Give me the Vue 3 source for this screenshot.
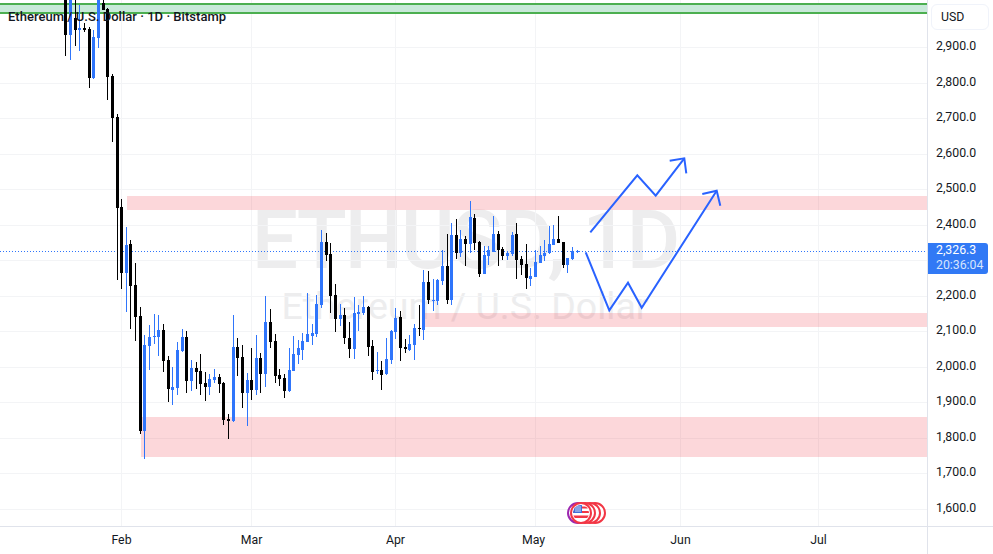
<template>
  <div class="terminal">
    <div class="pane">
      <!-- symbol watermark sits under the series -->
      <div class="watermark">
        <div class="wm-big">ETHUSD, 1D</div>
        <div class="wm-small">Ethereum / U.S. Dollar</div>
      </div>

      <svg class="series" width="927" height="526" viewBox="0 0 927 526">
        <g class="grid">
          <line v-for="y in gridY" :key="'h' + y" x1="0" x2="927" :y1="y" :y2="y" />
          <line v-for="m in months" :key="'v' + m.name" :x1="m.x" :x2="m.x" y1="0" y2="526" />
        </g>

        <rect class="zone" x="127" y="196" width="800" height="14" />
        <rect class="zone" x="425" y="313" width="502" height="14" />
        <rect class="zone" x="141" y="417" width="786" height="40" />

        <rect x="0" y="3" width="927" height="11" fill="#c8e9d9" />
        <rect x="0" y="3" width="927" height="2" fill="#4caf50" />
        <rect x="0" y="12" width="927" height="2" fill="#4caf50" />

        <line class="last-price" x1="0" x2="927" y1="251.5" y2="251.5" />

        <g v-for="c in candles" :key="c[0]" :fill="c[5] ? '#2f75fb' : '#000000'">
          <rect :x="c[0]" :y="c[1]" width="1" :height="c[2] - c[1]" />
          <rect :x="c[0] - 1" :y="c[3]" width="3" :height="Math.max(c[4] - c[3], 1)" />
        </g>

        <g class="drawing">
          <polyline points="590.3,232.3 637.3,175.3 655.7,195.7 684.3,158.3" />
          <polyline points="669.7,160.7 684.3,158.3 686.3,173.3" />
          <polyline points="585.7,252.3 609.3,310.3 628,282.7 641.7,307.7 716.7,190.7" />
          <polyline points="702.3,194 716.7,190.7 720.3,205.7" />
        </g>
      </svg>

      <div class="legend">Ethereum / U.S. Dollar · 1D · Bitstamp</div>

      <!-- economic events marker -->
      <svg class="events" width="40" height="24" viewBox="0 0 40 24">
        <circle cx="11" cy="12" r="10" fill="#fff" stroke="#9c27b0" stroke-width="2" />
        <circle cx="28" cy="12" r="10" fill="#fff" stroke="#f23645" stroke-width="2" />
        <circle cx="23" cy="12" r="10" fill="#fff" stroke="#f23645" stroke-width="2" />
        <circle cx="18" cy="12" r="10" fill="#fff" stroke="#f23645" stroke-width="2" />
        <circle cx="14" cy="12" r="10" fill="#fff" stroke="#f23645" stroke-width="2" />
        <clipPath id="flag-clip"><circle cx="14" cy="12" r="8" /></clipPath>
        <g clip-path="url(#flag-clip)">
          <rect x="6" y="4" width="16" height="16" fill="#fff" />
          <rect x="6" y="5.5" width="16" height="2" fill="#f23645" />
          <rect x="6" y="10" width="16" height="2" fill="#f23645" />
          <rect x="6" y="14.5" width="16" height="2.5" fill="#f23645" />
          <rect x="6" y="4" width="9" height="8" fill="#3f6fd8" />
          <path d="M8 6h6M8 8h6M8 10h6M9 5v6M11 5v6M13 5v6" stroke="#c9d6f5" stroke-width=".6" />
        </g>
      </svg>
    </div>

    <div class="price-axis">
      <div class="currency">USD</div>
      <div class="ticks">
        <div v-for="(p, i) in prices" :key="i" class="tick">{{ p }}</div>
      </div>
      <div class="price-badge">
        <span>2,326.3</span>
        <span class="countdown">20:36:04</span>
      </div>
    </div>

    <div class="time-axis">
      <span v-for="m in months" :key="m.name" class="month" :style="{ left: (m.label || m.x) + 'px' }">{{ m.name }}</span>
    </div>
    <div class="corner"></div>
  </div>
</template>

<script setup>
// the 2,300.0 tick is covered by the last price badge, so it stays empty
const prices = [
  "2,900.0", "2,800.0", "2,700.0", "2,600.0", "2,500.0", "2,400.0", "",
  "2,200.0", "2,100.0", "2,000.0", "1,900.0", "1,800.0", "1,700.0", "1,600.0",
];

const gridY = prices.map((p, i) => Math.round(47 + i * 35.54) + 0.5);

const months = [
  { name: "Feb", x: 121.5 },
  { name: "Mar", x: 251.5 },
  { name: "Apr", x: 395.5 },
  { name: "May", x: 535.5, label: 533.5 },
  { name: "Jun", x: 680.5 },
  { name: "Jul", x: 818.5 },
];

// x, wick top, wick bottom, body top, body bottom, blue
const candles = [
  [65, 0, 56, 0, 35, 0], [70, 0, 60, 0, 35, 1], [75, 0, 46, 18, 30, 0], [79, 5, 51, 28, 30, 1],
  [84, 23, 32, 28, 30, 0], [89, 27, 88, 29, 78, 0], [93, 30, 79, 37, 78, 1], [98, 0, 48, 0, 38, 1],
  [103, 0, 10, 3, 10, 0], [107, 8, 100, 9, 77, 0], [112, 74, 142, 76, 118, 0], [117, 114, 280, 117, 208, 0],
  [121, 199, 289, 207, 273, 0], [126, 227, 312, 245, 273, 1], [130, 240, 329, 244, 286, 0], [135, 263, 341, 285, 317, 0],
  [140, 307, 434, 316, 431, 0], [144, 335, 459, 345, 431, 1], [149, 325, 370, 337, 346, 1], [154, 314, 344, 336, 337, 1],
  [158, 315, 356, 330, 337, 1], [163, 324, 372, 330, 361, 0], [168, 356, 402, 360, 389, 0], [172, 367, 405, 387, 390, 1],
  [177, 342, 395, 350, 388, 1], [182, 329, 352, 337, 351, 1], [186, 331, 393, 337, 381, 0], [191, 360, 391, 368, 381, 1],
  [196, 362, 389, 368, 372, 0], [200, 354, 395, 371, 384, 0], [205, 372, 401, 383, 387, 0], [209, 374, 395, 379, 387, 1],
  [214, 369, 383, 377, 380, 1], [219, 374, 393, 377, 384, 0], [223, 382, 425, 383, 420, 0], [228, 414, 439, 419, 421, 0],
  [233, 315, 422, 347, 421, 1], [237, 338, 376, 347, 358, 0], [242, 345, 408, 357, 393, 0], [247, 373, 426, 380, 393, 1],
  [251, 348, 400, 380, 390, 0], [256, 335, 395, 358, 390, 1], [260, 353, 393, 358, 374, 0], [265, 296, 387, 322, 374, 1],
  [270, 309, 348, 322, 342, 0], [275, 334, 383, 341, 376, 0], [279, 369, 386, 375, 379, 0], [284, 374, 398, 378, 391, 0],
  [289, 348, 392, 370, 391, 1], [293, 336, 371, 354, 371, 1], [298, 340, 364, 348, 355, 1], [302, 333, 360, 341, 350, 1],
  [307, 293, 342, 334, 342, 1], [312, 324, 345, 333, 336, 1], [316, 295, 337, 304, 334, 1], [321, 230, 308, 242, 305, 1],
  [326, 233, 261, 242, 255, 0], [330, 243, 313, 254, 296, 0], [335, 284, 332, 295, 319, 0], [340, 304, 326, 315, 319, 1],
  [344, 308, 344, 315, 338, 0], [349, 322, 358, 338, 349, 0], [354, 297, 359, 313, 349, 1], [358, 305, 331, 312, 314, 1],
  [363, 296, 315, 307, 313, 1], [368, 306, 356, 307, 347, 0], [372, 340, 380, 346, 372, 0], [377, 352, 374, 370, 371, 1],
  [381, 361, 390, 370, 375, 0], [386, 338, 375, 359, 374, 1], [391, 330, 364, 331, 360, 1], [395, 308, 339, 318, 332, 1],
  [400, 311, 361, 317, 348, 0], [405, 339, 353, 347, 349, 0], [409, 335, 351, 344, 350, 1], [414, 324, 360, 328, 345, 1],
  [419, 305, 336, 328, 329, 0], [423, 270, 340, 282, 330, 1], [428, 271, 304, 282, 300, 0], [433, 279, 311, 300, 301, 1],
  [437, 279, 305, 280, 301, 1], [442, 250, 285, 266, 281, 1], [447, 234, 304, 266, 300, 0], [451, 223, 305, 235, 300, 1],
  [456, 219, 259, 235, 253, 0], [460, 230, 257, 239, 253, 1], [465, 236, 266, 239, 244, 0], [470, 201, 253, 217, 244, 1],
  [474, 214, 250, 218, 243, 0], [479, 241, 277, 242, 274, 0], [484, 246, 274, 255, 274, 1], [488, 246, 265, 250, 256, 1],
  [493, 216, 252, 234, 252, 1], [498, 231, 266, 234, 250, 0], [502, 247, 260, 249, 256, 0], [507, 251, 260, 253, 256, 1],
  [512, 232, 256, 235, 254, 1], [516, 223, 279, 234, 260, 0], [521, 256, 275, 259, 265, 0], [526, 244, 289, 264, 278, 0],
  [530, 268, 286, 276, 279, 1], [535, 250, 277, 262, 277, 1], [540, 246, 263, 255, 263, 1], [544, 240, 261, 253, 256, 1],
  [549, 226, 254, 244, 253, 1], [553, 225, 245, 239, 245, 1], [558, 216, 243, 239, 243, 0], [563, 242, 268, 242, 265, 0],
  [567, 258, 273, 258, 265, 1], [572, 247, 260, 251, 259, 1], [577, 250, 253, 251, 252, 1],
];
</script>

<style>
html,
body {
  margin: 0;
  background: #ffffff;
}
</style>

<style scoped>
.terminal {
  width: 993px;
  height: 554px;
  display: grid;
  grid-template-columns: 927px 66px;
  grid-template-rows: 526px 28px;
  overflow: hidden;
  background: #ffffff;
  color: #131722;
  font-family: Roboto, "Liberation Sans", sans-serif;
}

.pane {
  position: relative;
  overflow: hidden;
}

.watermark {
  position: absolute;
  inset: 0;
  padding: 0 0 3px 3px;
  display: flex;
  flex-direction: column;
  align-items: center;
  justify-content: center;
  color: #ededee;
  white-space: nowrap;
}

.wm-big {
  font-size: 82px;
  font-weight: 500;
  letter-spacing: -2px;
  line-height: 88px;
}

.wm-small {
  font-size: 37.5px;
  line-height: 44px;
}

.series {
  position: absolute;
  inset: 0;
  display: block;
}

.grid line {
  stroke: #f3f4f6;
  stroke-width: 1;
}

.zone {
  fill: #f23645;
  fill-opacity: 0.2;
}

.last-price {
  stroke: #2f75fb;
  stroke-width: 1;
  stroke-dasharray: 1 2;
}

.drawing polyline {
  fill: none;
  stroke: #2962ff;
  stroke-width: 2;
}

.legend {
  position: absolute;
  left: 8px;
  top: 8px;
  font-size: 13px;
  font-weight: 500;
  letter-spacing: 0.03px;
  line-height: 18px;
  white-space: nowrap;
}

.events {
  position: absolute;
  left: 567px;
  top: 501px;
}

.price-axis {
  position: relative;
  border-left: 1px solid #e0e3eb;
  font-size: 12.3px;
}

.currency {
  position: absolute;
  left: 3px;
  top: 4px;
  width: 58px;
  height: 26px;
  box-sizing: border-box;
  padding-left: 9px;
  border: 1px solid #f0f3fa;
  border-radius: 6px;
  line-height: 24px;
}

.ticks {
  padding: 29px 0 0 8px;
}

.tick {
  height: 35.54px;
  line-height: 35.54px;
}

.price-badge {
  position: absolute;
  left: 0;
  top: 243px;
  width: 60px;
  height: 31px;
  box-sizing: border-box;
  padding: 0 0 0 8px;
  display: flex;
  flex-direction: column;
  background: #3179f5;
  border-radius: 0 3px 3px 0;
  color: #ffffff;
  line-height: 15px;
}

.countdown {
  color: #d6e4fd;
}

.time-axis {
  position: relative;
  border-top: 1px solid #e0e3eb;
  font-size: 12.3px;
}

.month {
  position: absolute;
  top: 5px;
  transform: translateX(-50%);
  line-height: 16px;
}

.corner {
  border-top: 1px solid #e0e3eb;
  border-left: 1px solid #e0e3eb;
}
</style>
